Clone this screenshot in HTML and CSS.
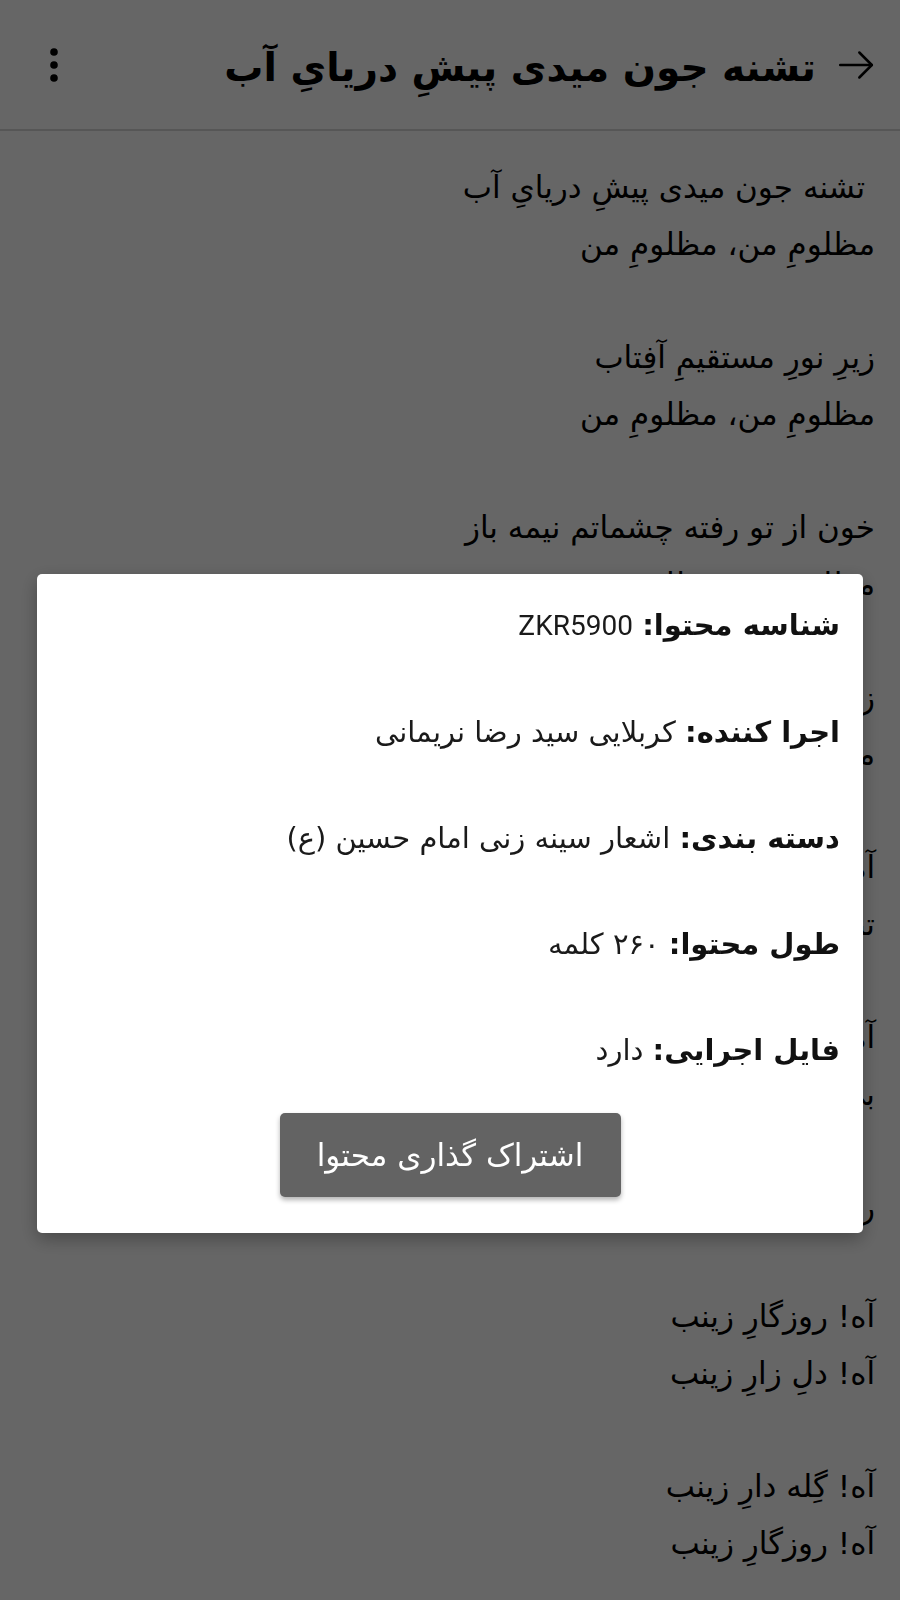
FILE: index.html
```html
<!DOCTYPE html>
<html lang="fa" dir="rtl">
<head>
    <meta charset="UTF-8">
    <title>تشنه جون میدی پیشِ دریایِ آب</title>
    <link rel="stylesheet" href="styles.css">
</head>
<body>

    <header class="app-bar">
        <span class="back-icon">
            <svg width="40" height="40" viewBox="0 0 24 24" fill="none" stroke="#000" stroke-width="1.5" stroke-linecap="round" stroke-linejoin="round">
                <path d="M2.5 12h19"/>
                <path d="M14 4.5l7.5 7.5-7.5 7.5"/>
            </svg>
        </span>
        <h1 class="app-title">تشنه جون میدی پیشِ دریایِ آب</h1>
        <span class="menu-icon">
            <svg width="12" height="36" viewBox="0 0 12 36" fill="#000">
                <circle cx="6" cy="5" r="3.8"/>
                <circle cx="6" cy="18" r="3.8"/>
                <circle cx="6" cy="31" r="3.8"/>
            </svg>
        </span>
    </header>

    <main class="poem">
        <p>&nbsp;تشنه جون میدی پیشِ دریایِ آب<br>مظلومِ من، مظلومِ من</p>
        <p>زیرِ نورِ مستقیمِ آفِتاب<br>مظلومِ من، مظلومِ من</p>
        <p>خون از تو رفته چشماتم نیمه باز<br>مظلومِ من، مظلومِ من</p>
        <p>زینب کنارِ گودال<br>مظلومِ من، مظلومِ من</p>
        <p>آه! ای حسینِ زینب<br>تنها شدی میانِ دشمن</p>
        <p>آه! از دلِ غمینم<br>بی تو چه کنم حسینم</p>
        <p class="single">روضه‌خوانِ تو زینب</p>
        <p>آه! روزگارِ زینب<br>آه! دلِ زارِ زینب</p>
        <p>آه! گِله دارِ زینب<br>آه! روزگارِ زینب</p>
    </main>

    <!-- content info dialog -->
    <div class="overlay">
        <div class="dialog">
            <div class="info-row"><b>شناسه محتوا:</b> <span class="latin">ZKR5900</span></div>
            <div class="info-row"><b>اجرا کننده:</b> کربلایی سید رضا نریمانی</div>
            <div class="info-row"><b>دسته بندی:</b> اشعار سینه زنی امام حسین (ع)</div>
            <div class="info-row"><b>طول محتوا:</b> ۲۶۰ کلمه</div>
            <div class="info-row"><b>فایل اجرایی:</b> دارد</div>
            <div class="dialog-actions">
                <button class="share-btn">اشتراک گذاری محتوا</button>
            </div>
        </div>
    </div>

</body>
</html>
```

FILE: styles.css
```css
body {
    margin: 0;
    padding: 0;
    background: #fff;
    color: #000;
    font-family: "DejaVu Sans", "Noto Sans", sans-serif;
    direction: rtl;
}

.app-bar {
    display: flex;
    align-items: center;
    height: 131px;
    padding: 0 24px 0 40px;
    border-bottom: 2px solid #d8d8d8;
    box-sizing: border-box;
}

.back-icon {
    display: flex;
    width: 40px;
    height: 40px;
}

.app-title {
    margin: 6px 20px 0 0;
    font-size: 39px;
    font-weight: bold;
    line-height: 1;
}

.menu-icon {
    display: flex;
    margin-right: auto;
    margin-left: 8px;
}

.poem {
    padding: 28px 25px 40px 40px;
    font-size: 31px;
    line-height: 57px;
}

.poem p {
    margin: 0 0 56px 0;
}

.poem p.single {
    margin-bottom: 52px;
}

.overlay {
    position: fixed;
    top: 0;
    left: 0;
    right: 0;
    bottom: 0;
    background: rgba(0, 0, 0, 0.6);
    padding: 574px 37px 0 37px;
    box-sizing: border-box;
}

.dialog {
    background: #fff;
    border-radius: 5px;
    box-shadow: 0 6px 18px rgba(0, 0, 0, 0.3);
    padding: 0 23px 36px 23px;
}

.info-row {
    padding: 28px 0 32px 0;
    line-height: 46px;
    font-size: 29px;
    color: #1a1a1a;
}

.info-row b {
    font-weight: bold;
    color: #111;
}

.latin {
    font-family: Roboto, "Noto Sans", sans-serif;
    font-size: 28px;
}

.dialog-actions {
    display: flex;
    justify-content: center;
    margin-top: 8px;
}

.share-btn {
    width: 341px;
    height: 84px;
    border: none;
    border-radius: 5px;
    background-color: #636363;
    color: #fff;
    font-family: "DejaVu Sans", "Noto Sans", sans-serif;
    font-size: 31px;
    box-shadow: 0 3px 5px rgba(0, 0, 0, 0.3);
    cursor: pointer;
}
```
